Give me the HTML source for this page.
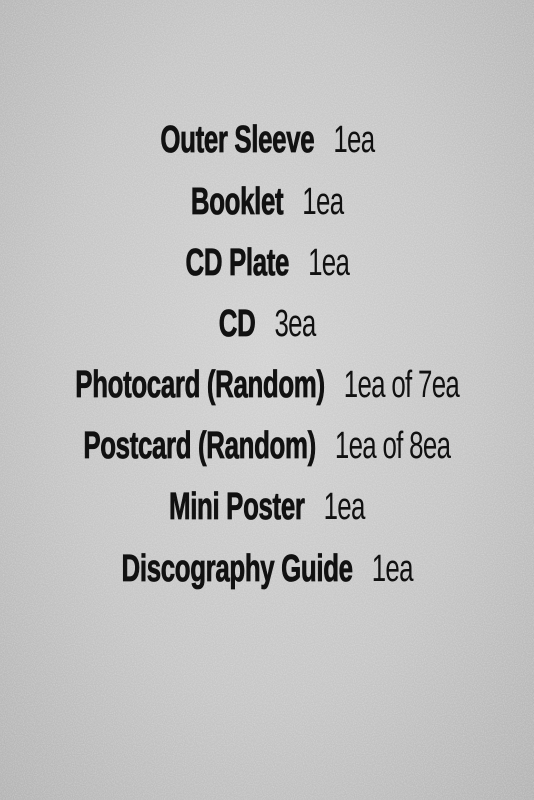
<!DOCTYPE html>
<html><head><meta charset="utf-8"><style>
html,body{margin:0;padding:0}
body{width:534px;height:800px;position:relative;overflow:hidden;background:radial-gradient(ellipse at 50% 45%,#d2d2d2 0%,#c6c6c6 55%,#b4b4b4 100%);font-family:"Liberation Sans",sans-serif;color:#111}
svg.n{position:absolute;left:0;top:0}
.l{position:absolute;left:-233px;width:1000px;text-align:center;font-size:38px;line-height:40px;white-space:nowrap}
.l span{display:inline-block;transform:scaleX(0.68);transform-origin:center}
b{font-weight:bold;letter-spacing:-0.5px;-webkit-text-stroke:0.8px #111}
i{font-style:normal;font-weight:normal;margin-left:28px;letter-spacing:-1px}
</style></head><body>
<svg class="n" width="534" height="800"><filter id="f"><feTurbulence type="fractalNoise" baseFrequency="0.9" numOctaves="2" seed="3"/><feColorMatrix type="matrix" values="0 0 0 0 1  0 0 0 0 1  0 0 0 0 1  0 0 0 -1.4 0.9"/></filter><rect width="534" height="800" filter="url(#f)" opacity="0.35"/></svg>
<div class="l" style="top:120px"><span><b>Outer Sleeve</b><i>1ea</i></span></div>
<div class="l" style="top:182px"><span><b>Booklet</b><i>1ea</i></span></div>
<div class="l" style="top:243px"><span><b>CD Plate</b><i>1ea</i></span></div>
<div class="l" style="top:304px"><span><b>CD</b><i>3ea</i></span></div>
<div class="l" style="top:365px"><span><b>Photocard (Random)</b><i>1ea of 7ea</i></span></div>
<div class="l" style="top:426px"><span><b>Postcard (Random)</b><i>1ea of 8ea</i></span></div>
<div class="l" style="top:487px"><span><b>Mini Poster</b><i>1ea</i></span></div>
<div class="l" style="top:549px"><span><b>Discography Guide</b><i>1ea</i></span></div>
</body></html>
